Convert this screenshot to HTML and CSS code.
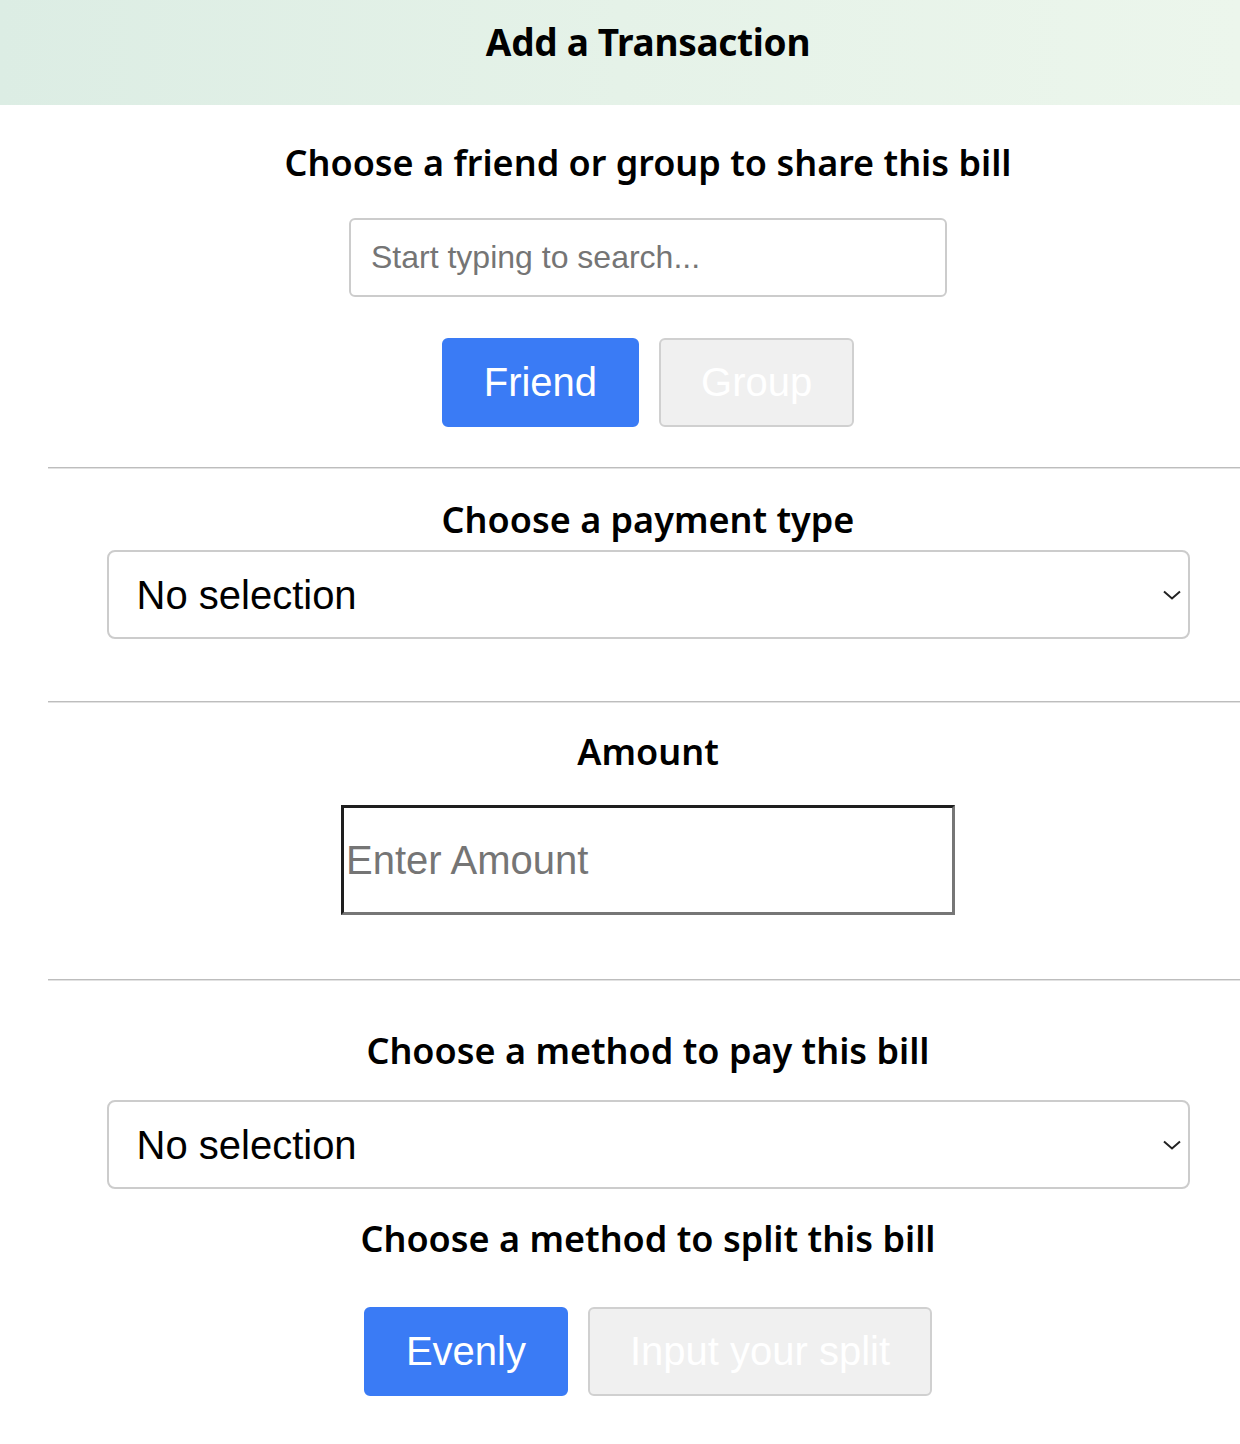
FILE: index.html
```html
<!DOCTYPE html>
<html lang="en">
<head>
<meta charset="utf-8">
<title>Add a Transaction</title>
<link rel="stylesheet" href="styles.css">
</head>
<body>
<header class="topbar">
  <h1 class="topbar-title">Add a Transaction</h1>
</header>
<main class="form">
  <section class="block block-share">
    <h2 class="label">Choose a friend or group to share this bill</h2>
    <input class="search" type="text" placeholder="Start typing to search...">
    <div class="toggle toggle-share">
      <button class="btn btn-active" type="button">Friend</button>
      <button class="btn btn-idle" type="button">Group</button>
    </div>
  </section>
  <hr class="rule">
  <section class="block block-type">
    <h2 class="label">Choose a payment type</h2>
    <select class="select">
      <option>No selection</option>
    </select>
  </section>
  <hr class="rule">
  <section class="block block-amount">
    <h2 class="label">Amount</h2>
    <input class="amount" type="text" placeholder="Enter Amount">
  </section>
  <hr class="rule">
  <section class="block block-pay">
    <h2 class="label">Choose a method to pay this bill</h2>
    <select class="select">
      <option>No selection</option>
    </select>
    <h2 class="label label-split">Choose a method to split this bill</h2>
    <div class="toggle toggle-split">
      <button class="btn btn-active" type="button">Evenly</button>
      <button class="btn btn-idle" type="button">Input your split</button>
    </div>
  </section>
</main>
</body>
</html>
```

FILE: styles.css
```css
html, body {
  margin: 0;
  padding: 0;
  background: #ffffff;
  overflow-x: hidden;
}

body {
  font-family: "Noto Sans", "DejaVu Sans", sans-serif;
  color: #000;
}

.topbar {
  height: 105px;
  background: linear-gradient(90deg, #dcede4 0%, #e5f2e8 50%, #ecf6ec 100%);
  display: flex;
  align-items: center;
  justify-content: center;
  padding-left: 56px;
  box-sizing: border-box;
}

.topbar-title {
  margin: 0 0 22px 0;
  font-size: 37px;
  font-weight: 700;
  line-height: 44px;
  letter-spacing: -0.3px;
}

.form {
  margin-left: 48px;
  width: 1200px;
}

.block {
  display: flex;
  flex-direction: column;
  align-items: center;
}

.label {
  margin: 0;
  font-size: 36px;
  font-weight: 600;
  line-height: 44px;
  text-align: center;
}

.block-share { padding-top: 36px; }
.block-share .search { margin-top: 33px; }
.block-share .toggle { margin-top: 41px; margin-bottom: 40px; }

.block-type { padding-top: 29px; }
.block-type .select { margin-top: 8px; margin-bottom: 62px; }

.block-amount { padding-top: 27px; }
.block-amount .amount { margin-top: 31px; margin-bottom: 64px; }

.block-pay { padding-top: 48px; }
.block-pay .select { margin-top: 27px; }
.label-split { margin-top: 28px; }
.block-pay .toggle { margin-top: 46px; margin-bottom: 49px; }

.rule {
  margin: 0;
  height: 0;
  border: 0;
  border-top: 1px solid #bdbdbd;
  border-bottom: 1px solid #e2e2e2;
}

.search {
  width: 598px;
  height: 79px;
  box-sizing: border-box;
  border: 2px solid #cccccc;
  border-radius: 6px;
  padding: 0 20px;
  font-family: "Liberation Sans", Arial, sans-serif;
  font-size: 32px;
  color: #333;
  background: #fff;
  outline: none;
}

.search::placeholder { color: #757575; }

.toggle {
  display: flex;
  gap: 20px;
}

.btn {
  height: 89px;
  box-sizing: border-box;
  padding: 0 40px;
  border-radius: 6px;
  font-family: "Liberation Sans", Arial, sans-serif;
  font-size: 40px;
  color: #ffffff;
  cursor: pointer;
}

.btn-active {
  background: #3a7bf5;
  border: 2px solid #3a7bf5;
}

.btn-idle {
  background: #f0f0f0;
  border: 2px solid #d0d0d0;
}

.select {
  width: 1083px;
  height: 89px;
  box-sizing: border-box;
  border: 2px solid #cccccc;
  border-radius: 8px;
  padding: 0 50px 0 28px;
  font-family: "Liberation Sans", Arial, sans-serif;
  font-size: 40px;
  color: #000;
  background: #fff url("data:image/svg+xml,%3Csvg xmlns='http://www.w3.org/2000/svg' width='18' height='10' viewBox='0 0 18 10'%3E%3Cpath d='M1 1.5 L9 8.5 L17 1.5' fill='none' stroke='%23222' stroke-width='2'/%3E%3C/svg%3E") no-repeat right 7px center;
  -webkit-appearance: none;
  appearance: none;
  outline: none;
}

.amount {
  width: 614px;
  height: 110px;
  box-sizing: border-box;
  border-style: solid;
  border-width: 3px;
  border-color: #1e1e1e #767676 #767676 #1e1e1e;
  padding: 0 2px;
  font-family: "Liberation Sans", Arial, sans-serif;
  font-size: 40px;
  color: #000;
  background: #fff;
  outline: none;
}

.amount::placeholder { color: #757575; }
```
